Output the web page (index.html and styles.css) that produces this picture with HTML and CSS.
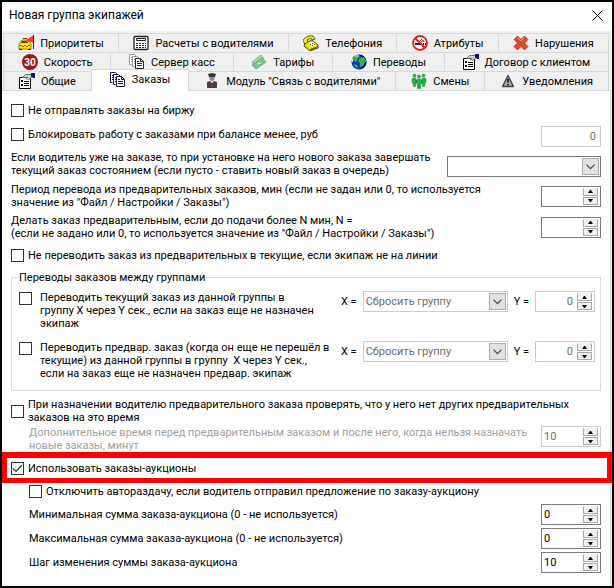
FILE: index.html
```
<!DOCTYPE html>
<html lang="ru">
<head>
    <meta charset="UTF-8">
    <meta name="viewport" content="width=device-width, initial-scale=1.0">
    <title>Новая группа экипажей</title>
    <link rel="stylesheet" href="styles.css">
</head>
<body>
    <!-- Общие символы для иконок -->
    <svg class="symbols" aria-hidden="true">
        <symbol id="icon-props" viewBox="0 0 16 16">
            <path d="M.5 4.500h11v11H.5z" fill="#fff" stroke="#000"/>
            <path d="M2 7h2v2H2zM2 11h2v2H2zM5 8h5v1H5zM5 10h5v1H5zM5 12h5v1H5z" fill="#000"/>
            <path d="M3.500 4.500l3-3h6v3l-3 2-2-1 1-1z" fill="#d0d0d0" stroke="#555" stroke-width=".8"/>
            <path d="M12 0h4v5h-2l-2-2z" fill="#101080"/>
        </symbol>
        <symbol id="icon-docs" viewBox="0 0 16 16">
            <path class="back" d="M2.500 10.500h-2V.5h5l2 2" fill="#fff"/>
            <path class="back" d="M5.500 12.500h-2v-10h5l2 2" fill="#fff"/>
            <path d="M6.500 4.500h5l3 3v7h-8z" fill="#fff"/>
            <path d="M11.500 4.500v3h3M8 7.500h2M8 9.500h5M8 11.500h5" fill="none"/>
            <path class="back" d="M2 3.500h1M2 5.500h1M2 7.500h1M5 5.500h1M5 7.500h1M5 9.500h1" fill="none"/>
        </symbol>
        <symbol id="icon-chevron" viewBox="0 0 9 6">
            <path d="M.5.7l4 4 4-4" fill="none" stroke="#444" stroke-width="1.200"/>
        </symbol>
        <symbol id="icon-up" viewBox="0 0 5 3"><path d="M0 3h5L3 0H2z"/></symbol>
        <symbol id="icon-down" viewBox="0 0 5 3"><path d="M0 0h5L3 3H2z"/></symbol>
    </svg>

    <div class="window">
        <header class="title-bar">
            <h1>Новая группа экипажей</h1>
            <button type="button" class="close" aria-label="Закрыть">
                <svg width="11" height="11" viewBox="0 0 11 11"><path d="M.5.5l10 10M10.500.5l-10 10" stroke="#000" fill="none"/></svg>
            </button>
        </header>

        <nav class="tabs">
            <div class="tab-row">
                <button type="button" class="tab">
                    <svg class="icon" viewBox="0 0 16 16">
                        <path d="M1 9l3-4h6l3 4v5H1z" fill="#ffe600" stroke="#8a6a00" stroke-width=".8"/>
                        <path d="M4 6h5l1 2H3zM5 3h4v1H5z" fill="#554400"/>
                        <path d="M1 14h3v1H1zM10 14h3v1h-3z" fill="#222"/>
                        <path d="M2 10h2v1H2zM6 10h2v1H6zM10 10h2v1h-2zM4 11h2v1H4zM8 11h2v1H8z" fill="#806000"/>
                        <path d="M8 5l7-4.500V8c-3-2-4 0-7-3z" fill="#f33"/>
                        <path d="M15.500 0v14" stroke="#333"/>
                    </svg>
                    <span>Приоритеты</span>
                </button>
                <button type="button" class="tab">
                    <svg class="icon" viewBox="0 0 16 16">
                        <rect x="1" y="1.500" width="14" height="13" rx="1" fill="#fff" stroke="#222" stroke-width="1.300"/>
                        <path d="M3.500 3.500h9v2h-9z" fill="none" stroke="#222"/>
                        <path d="M3 8h2v1H3zM6 8h2v1H6zM9 8h2v1H9zM12 8h1v1h-1zM3 10h2v1H3zM6 10h2v1H6zM9 10h2v1H9zM12 10h1v1h-1zM3 12h2v1H3zM6 12h2v1H6zM9 12h2v1H9zM12 12h1v1h-1z" fill="#222"/>
                    </svg>
                    <span>Расчеты с водителями</span>
                </button>
                <button type="button" class="tab">
                    <svg class="icon" viewBox="0 0 16 16">
                        <path d="M2 8l7-3 6 5v3l-8 3-6-5z" fill="#f0e000" stroke="#222" stroke-width=".8"/>
                        <path d="M7 14l8-3v2l-8 3z" fill="#6b5d00"/>
                        <path d="M0 6c0-3 6-6 10-5l2 3-3 1-1-2-4 2 1 2-3 2z" fill="#fff200" stroke="#333" stroke-width=".8"/>
                        <path d="M5 9l4-2 4 3-4 2z" fill="#fff"/>
                        <path d="M7 9h1v1H7zM9 8h1v1H9zM9 10h1v1H9zM11 9h1v1h-1z" fill="#333"/>
                    </svg>
                    <span>Телефония</span>
                </button>
                <button type="button" class="tab">
                    <svg class="icon" viewBox="0 0 16 16">
                        <circle cx="8" cy="8" r="7" fill="#fff"/>
                        <path d="M3 8h7v2H3zM11 8h1v2h-1zM13 8h1v2h-1z" fill="#222"/>
                        <path d="M12 7c0-2-2-1-3-3M10 7c0-1-2-1-2-2" fill="none" stroke="#222"/>
                        <circle cx="8" cy="8" r="7" fill="none" stroke="#ee1c1c" stroke-width="1.800"/>
                        <path d="M3 3l10 10" stroke="#ee1c1c" stroke-width="1.800"/>
                    </svg>
                    <span>Атрибуты</span>
                </button>
                <button type="button" class="tab">
                    <svg class="icon" viewBox="0 0 16 16">
                        <path d="M4.500 1L8 4.500 11.500 1 15 4.500 11.500 8l3.500 3.500-3.500 3.500L8 11.500 4.500 15 1 11.500 4.500 8 1 4.500z" fill="#dd4a33" stroke="#a82f1d" stroke-width=".8" stroke-linejoin="round"/>
                        <path d="M4.500 2.500L8 6l3.500-3.500" fill="none" stroke="#f39a85"/>
                    </svg>
                    <span>Нарушения</span>
                </button>
            </div>

            <div class="tab-row">
                <button type="button" class="tab">
                    <svg class="icon" viewBox="0 0 16 16">
                        <circle cx="8" cy="8" r="8" fill="#9c1616"/>
                        <text class="speed" x="8" y="12" text-anchor="middle">30</text>
                    </svg>
                    <span>Скорость</span>
                </button>
                <button type="button" class="tab">
                    <svg class="icon docs-gray"><use href="#icon-docs"/></svg>
                    <span>Сервер касс</span>
                </button>
                <button type="button" class="tab">
                    <svg class="icon" viewBox="0 0 16 16">
                        <path d="M1 8l9-7 3 4-9 8z" fill="#a9dcae" stroke="#5c9f68" stroke-width=".7"/>
                        <path d="M1 11l10-7 4 4-10 7z" fill="#8ccb96" stroke="#4c8e59" stroke-width=".7"/>
                        <ellipse cx="8" cy="9.500" rx="2.200" ry="1.700" fill="#d4efd7" stroke="#4c8e59" stroke-width=".6"/>
                        <path d="M4 11.500l1 1M11 6.500l1 1" stroke="#4c8e59"/>
                    </svg>
                    <span>Тарифы</span>
                </button>
                <button type="button" class="tab">
                    <svg class="icon" viewBox="0 0 16 16">
                        <circle cx="8" cy="8" r="7.500" fill="#1636c8"/>
                        <path d="M8 .5a7.500 7.500 0 0 1 0 15c6-3 6-12 0-15z" fill="#071555"/>
                        <path d="M2 3c2-2 4-2 6-2l1 2-2 1-1 3-2 1-1-2-2 1zM9 4l4-1 2 4-2 3-2 3-2-1V9L7 7zM3 10l3 1 1 3-3-1z" fill="#35b548"/>
                        <path d="M4 1.500h3v1H4zM1 5h1v3H1z" fill="#cfe8ff"/>
                    </svg>
                    <span>Переводы</span>
                </button>
                <button type="button" class="tab">
                    <svg class="icon"><use href="#icon-props"/></svg>
                    <span>Договор с клиентом</span>
                </button>
            </div>

            <div class="tab-row">
                <button type="button" class="tab">
                    <svg class="icon"><use href="#icon-props"/></svg>
                    <span>Общие</span>
                </button>
                <button type="button" class="tab active">
                    <svg class="icon docs-blue"><use href="#icon-docs"/></svg>
                    <span>Заказы</span>
                </button>
                <button type="button" class="tab">
                    <svg class="icon" viewBox="0 0 16 16">
                        <path d="M4 1l4-1 4 1-1 3H5z" fill="#333"/>
                        <path d="M5.500 4h5v2.500L8 8.500 5.500 6.500z" fill="#8a8a8a"/>
                        <path d="M3 9l3-1 2 2 2-2 3 1v6H3z" fill="#444"/>
                        <path d="M7 8.500h2L8.500 10h-1z" fill="#fff"/>
                        <path d="M7.500 9.500h1L9 13l-1 1-1-1z" fill="#b02020"/>
                    </svg>
                    <span>Модуль "Связь с водителями"</span>
                </button>
                <button type="button" class="tab">
                    <svg class="icon" viewBox="0 0 16 16">
                        <g fill="#2fb04c" stroke="#15803a" stroke-width=".5">
                            <circle cx="3.500" cy="2.500" r="1.500"/>
                            <circle cx="12.500" cy="2.500" r="1.500"/>
                            <path d="M2 5h3v5l-.5 3.500h-2L2 10 1 9.500V6zM11 5h3l1 1v3.500l-1 .5-.5 3.500h-2L11 10z"/>
                            <circle cx="8" cy="3.500" r="1.600"/>
                            <path d="M6.500 6h3l1 1v3.500h-1v5h-3v-5h-1V7z"/>
                        </g>
                        <path d="M8 11v4M5.200 7v3M10.800 7v3" stroke="#0d5a27" stroke-width=".6"/>
                    </svg>
                    <span>Смены</span>
                </button>
                <button type="button" class="tab">
                    <svg class="icon" viewBox="0 0 16 16">
                        <path d="M8 2.500L13.500 13.500h-11z" fill="#aaa" stroke="#444" stroke-width="1.400" stroke-linejoin="round"/>
                        <path d="M7 6h2l-.4 4H7.400zM7.200 11h1.600v1.500H7.200z" fill="#111"/>
                    </svg>
                    <span>Уведомления</span>
                </button>
            </div>
        </nav>

        <main class="panel">
            <div class="row">
                <label class="check"><input type="checkbox"> Не отправлять заказы на биржу</label>
            </div>

            <div class="row balance">
                <label class="check"><input type="checkbox"> Блокировать работу с заказами при балансе менее, руб</label>
                <input type="text" class="field number" value="0" aria-label="Баланс, руб" disabled>
            </div>

            <div class="row state">
                <label for="state">Если водитель уже на заказе, то при установке на него нового заказа завершать<br>текущий заказ состоянием (если пусто - ставить новый заказ в очередь)</label>
                <div class="combo wide">
                    <select id="state"><option></option></select>
                    <span class="arrow"><svg width="9" height="6"><use href="#icon-chevron"/></svg></span>
                </div>
            </div>

            <div class="row period">
                <label for="period">Период перевода из предварительных заказов, мин (если не задан или 0, то используется<br>значение из "Файл / Настройки / Заказы")</label>
                <div class="spin">
                    <input type="text" id="period">
                    <div class="arrows">
                        <button type="button" aria-label="Больше"><svg width="5" height="3"><use href="#icon-up"/></svg></button>
                        <button type="button" aria-label="Меньше"><svg width="5" height="3"><use href="#icon-down"/></svg></button>
                    </div>
                </div>
            </div>

            <div class="row before">
                <label for="before">Делать заказ предварительным, если до подачи более N мин, N =<br>(если не задано или 0, то используется значение из "Файл / Настройки / Заказы")</label>
                <div class="spin">
                    <input type="text" id="before">
                    <div class="arrows">
                        <button type="button" aria-label="Больше"><svg width="5" height="3"><use href="#icon-up"/></svg></button>
                        <button type="button" aria-label="Меньше"><svg width="5" height="3"><use href="#icon-down"/></svg></button>
                    </div>
                </div>
            </div>

            <div class="row offline">
                <label class="check"><input type="checkbox"> Не переводить заказ из предварительных в текущие, если экипаж не на линии</label>
            </div>

            <fieldset class="transfers">
                <legend>Переводы заказов между группами</legend>

                <div class="transfer">
                    <label class="check multi"><input type="checkbox"> <span>Переводить текущий заказ из данной группы в<br>группу X через Y сек., если на заказ еще не назначен<br>экипаж</span></label>
                    <label for="x1">X =</label>
                    <div class="combo off">
                        <select id="x1" disabled><option>Сбросить группу</option></select>
                        <span class="arrow"><svg width="9" height="6"><use href="#icon-chevron"/></svg></span>
                    </div>
                    <label for="y1">Y =</label>
                    <div class="spin off number">
                        <input type="text" id="y1" value="0" disabled>
                        <div class="arrows">
                            <button type="button" aria-label="Больше" disabled><svg width="5" height="3"><use href="#icon-up"/></svg></button>
                            <button type="button" aria-label="Меньше" disabled><svg width="5" height="3"><use href="#icon-down"/></svg></button>
                        </div>
                    </div>
                </div>

                <div class="transfer">
                    <label class="check multi"><input type="checkbox"> <span>Переводить предвар. заказ (когда он еще не перешёл в<br>текущие) из данной группы в группу&nbsp; X через Y сек.,<br>если на заказ еще не назначен предвар. экипаж</span></label>
                    <label for="x2">X =</label>
                    <div class="combo off">
                        <select id="x2" disabled><option>Сбросить группу</option></select>
                        <span class="arrow"><svg width="9" height="6"><use href="#icon-chevron"/></svg></span>
                    </div>
                    <label for="y2">Y =</label>
                    <div class="spin off number">
                        <input type="text" id="y2" value="0" disabled>
                        <div class="arrows">
                            <button type="button" aria-label="Больше" disabled><svg width="5" height="3"><use href="#icon-up"/></svg></button>
                            <button type="button" aria-label="Меньше" disabled><svg width="5" height="3"><use href="#icon-down"/></svg></button>
                        </div>
                    </div>
                </div>
            </fieldset>

            <div class="row assign">
                <label class="check"><input type="checkbox"> <span>При назначении водителю предварительного заказа проверять, что у него нет других предварительных<br>заказов на это время</span></label>
            </div>

            <div class="row extra indent">
                <label for="extra">Дополнительное время перед предварительным заказом и после него, когда нельзя назначать<br>новые заказы, минут</label>
                <div class="spin off">
                    <input type="text" id="extra" value="10" disabled>
                    <div class="arrows">
                        <button type="button" aria-label="Больше" disabled><svg width="5" height="3"><use href="#icon-up"/></svg></button>
                        <button type="button" aria-label="Меньше" disabled><svg width="5" height="3"><use href="#icon-down"/></svg></button>
                    </div>
                </div>
            </div>

            <div class="highlight">
                <label class="check"><input type="checkbox" checked> Использовать заказы-аукционы</label>
            </div>

            <div class="row indent auto">
                <label class="check"><input type="checkbox"> Отключить автораздачу, если водитель отправил предложение по заказу-аукциону</label>
            </div>

            <div class="row indent sum">
                <label for="min">Минимальная сумма заказа-аукциона (0 - не используется)</label>
                <div class="spin">
                    <input type="text" id="min" value="0">
                    <div class="arrows">
                        <button type="button" aria-label="Больше"><svg width="5" height="3"><use href="#icon-up"/></svg></button>
                        <button type="button" aria-label="Меньше"><svg width="5" height="3"><use href="#icon-down"/></svg></button>
                    </div>
                </div>
            </div>

            <div class="row indent sum">
                <label for="max">Максимальная сумма заказа-аукциона (0 - не используется)</label>
                <div class="spin">
                    <input type="text" id="max" value="0">
                    <div class="arrows">
                        <button type="button" aria-label="Больше"><svg width="5" height="3"><use href="#icon-up"/></svg></button>
                        <button type="button" aria-label="Меньше"><svg width="5" height="3"><use href="#icon-down"/></svg></button>
                    </div>
                </div>
            </div>

            <div class="row indent sum">
                <label for="step">Шаг изменения суммы заказа-аукциона</label>
                <div class="spin">
                    <input type="text" id="step" value="10">
                    <div class="arrows">
                        <button type="button" aria-label="Больше"><svg width="5" height="3"><use href="#icon-up"/></svg></button>
                        <button type="button" aria-label="Меньше"><svg width="5" height="3"><use href="#icon-down"/></svg></button>
                    </div>
                </div>
            </div>
        </main>
    </div>
</body>
</html>
```
FILE: styles.css
```
* {
    box-sizing: border-box;
}

body {
    margin: 0;
    font-family: Roboto, "DejaVu Sans", sans-serif;
    font-size: 11px;
    line-height: 13px;
    color: #000;
}

button, input, select {
    font: inherit;
    color: inherit;
    margin: 0;
    padding: 0;
}

.symbols {
    display: none;
}

.window {
    display: flex;
    flex-direction: column;
    min-height: 100vh;
    border: 2px solid #000;
    background: #f0f0f0;
}

/* Заголовок окна */
.title-bar {
    display: flex;
    align-items: center;
    justify-content: space-between;
    height: 29px;
    padding: 0 9px 2px 7px;
    background: #fff;
}

h1 {
    margin: 0;
    font-size: 12px;
    font-weight: normal;
}

.close {
    display: flex;
    border: 0;
    background: none;
}

/* Вкладки */
.tabs {
    padding: 2px 3px 0 1px;
}

.tab-row {
    display: flex;
    height: 19px;
    border-right: 1px solid #d9d9d9;
}

.tab {
    display: flex;
    flex: 1 1 auto;
    align-items: center;
    justify-content: center;
    gap: 6px;
    border: 0 solid #d9d9d9;
    border-width: 1px 0 0 1px;
    background: #f0f0f0;
    white-space: nowrap;
}

.tab.active {
    position: relative;
    margin: -2px -1px -1px 0;
    padding: 0 3px 2px;
    border-right-width: 1px;
    background: #fff;
}

.icon {
    width: 16px;
    height: 16px;
    flex: none;
}

.speed {
    font-size: 10px;
    font-weight: bold;
    fill: #fff;
}

.docs-gray {
    stroke: #222;
    --back: #999;
}

.docs-blue {
    stroke: #101070;
    --back: #101070;
}

.back {
    stroke: var(--back);
}

/* Содержимое вкладки */
.panel {
    flex: 1;
    margin-right: 1px;
    padding: 9px 0 13px;
    border: 0 solid #d9d9d9;
    border-width: 1px 1px 0 0;
    background: #fff;
}

.row {
    display: flex;
    align-items: center;
    justify-content: space-between;
    margin: 0 9px;
    white-space: nowrap;
}

.indent {
    padding-left: 18px;
}

.check {
    display: flex;
    align-items: center;
    gap: 4px;
    min-height: 20px;
}

.check input {
    appearance: none;
    flex: none;
    width: 13px;
    height: 13px;
    border: 1px solid #333;
    background: #fff;
}

.check input:checked {
    background: url("data:image/svg+xml,%3Csvg xmlns='http://www.w3.org/2000/svg' viewBox='0 0 11 11'%3E%3Cpath d='M1 5.500l3 3 6-6.500' fill='none' stroke='%23333' stroke-width='1.200'/%3E%3C/svg%3E");
}

.check.multi {
    align-items: flex-start;
    gap: 8px;
}

.check.multi input {
    margin-top: 1px;
}

.field, .spin, .combo {
    flex: none;
    height: 21px;
    border: 1px solid #7a7a7a;
    background: #fff;
}

.field {
    width: 60px;
    padding: 0 4px;
}

.field:disabled, .off {
    border-color: #ccc;
}

.field:disabled, .off input, .off select {
    color: #6d6d6d;
}

.field.number, .number input {
    text-align: right;
}

.spin {
    display: flex;
    align-items: center;
    width: 60px;
    padding-right: 2px;
}

.spin input {
    flex: 1;
    min-width: 0;
    padding: 0 4px 0 2px;
    border: 0;
    background: none;
}

.arrows {
    display: flex;
    flex-direction: column;
    gap: 1px;
}

.arrows button {
    display: flex;
    align-items: center;
    justify-content: center;
    width: 15px;
    height: 8px;
    border: 1px solid #a8a8a8;
    background: #f0f0f0;
}

.arrows button:first-child {
    border-top-color: #f0f0f0;
}

.arrows svg {
    fill: #000;
}

.combo {
    position: relative;
    width: 145px;
}

.combo.wide {
    width: 154px;
}

.combo select {
    appearance: none;
    width: 100%;
    height: 19px;
    padding: 0 20px 0 2px;
    border: 0;
    background: none;
    opacity: 1;
}

.arrow {
    position: absolute;
    top: 1px;
    right: 1px;
    bottom: 1px;
    display: flex;
    align-items: center;
    justify-content: center;
    width: 17px;
    border: 1px solid #adadad;
    background: #e1e1e1;
    pointer-events: none;
}

.balance {
    align-items: flex-start;
    margin-top: 4px;
}

.balance .field {
    margin-top: 2px;
}

.state {
    align-items: flex-end;
    margin-top: 4px;
}

.period {
    margin-top: 6px;
}

.before {
    margin-top: 5px;
}

.offline {
    margin-top: 5px;
}

.transfers {
    min-width: 0;
    margin: 6px 9px 0;
    padding: 7px 5px 10px 7px;
    border: 1px solid #dcdcdc;
}

legend {
    margin-left: -1px;
    padding: 0 1px;
}

.transfer {
    display: flex;
    align-items: flex-start;
    gap: 6px;
    white-space: nowrap;
}

.transfer + .transfer {
    margin-top: 11px;
}

.transfer .multi {
    flex: 1;
}

.transfer > label:not(.check) {
    line-height: 21px;
}

.assign {
    margin-top: 7px;
}

.extra {
    align-items: flex-start;
    margin-top: 2px;
    color: #a0a0a0;
}

/* Выделенная настройка */
.highlight {
    position: relative;
    margin-right: -2px;
    padding-left: 4px;
    border: 5px solid #f00;
    border-top-width: 6px;
}

.auto .check {
    min-height: 16px;
}

.sum {
    margin-top: 3px;
}

.auto + .sum {
    margin-top: 5px;
}
```
